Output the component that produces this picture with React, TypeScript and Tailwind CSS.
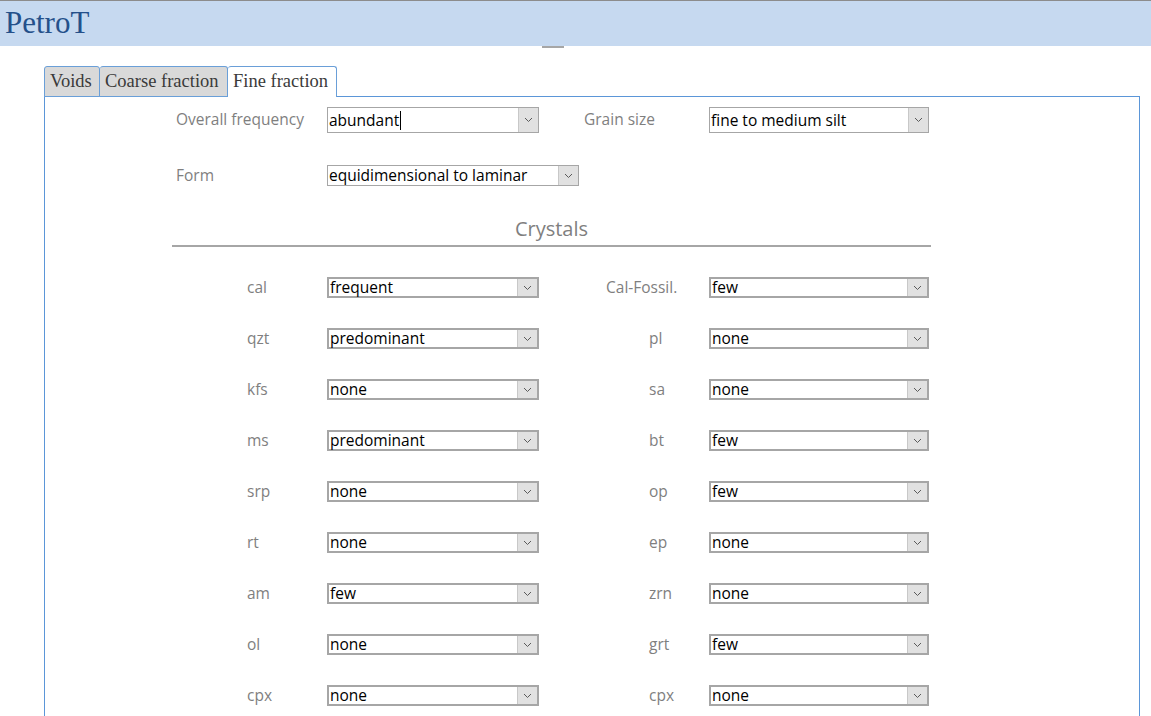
import React from 'react';

const serif = { fontFamily: '"Liberation Serif", "DejaVu Serif", serif' };
const sans = { fontFamily: '"Open Sans", "Noto Sans", sans-serif' };

type ComboProps = {
  value: string;
  width: string;
  height: string;
  thick?: boolean;
  cursor?: boolean;
};

// Access-style combo box with the little grey drop button
const Combo: React.FC<ComboProps> = ({ value, width, height, thick, cursor }) => (
  <div
    className={`${width} ${height} flex shrink-0 bg-white ${thick ? 'border-2' : 'border'} border-[#a6a6a6]`}
  >
    <div
      className={`flex flex-1 whitespace-nowrap pl-[1px] text-[15.5px] leading-[17px] text-black ${thick ? 'items-end' : 'items-center'}`}
      style={sans}
    >
      <span>{value}</span>
      {cursor && <span className="ml-px h-[19px] w-px bg-black" />}
    </div>
    <div className="flex w-[20px] items-center justify-center border-l border-[#c8c8c8] bg-[#e1e1e1]">
      <svg width="9" height="6" viewBox="0 0 9 6" fill="none">
        <polyline points="1,1 4.5,4.5 8,1" stroke="#5a5a5a" strokeWidth="1" />
      </svg>
    </div>
  </div>
);

const crystals: [string, string, string, string][] = [
  ['cal', 'frequent', 'Cal-Fossil.', 'few'],
  ['qzt', 'predominant', 'pl', 'none'],
  ['kfs', 'none', 'sa', 'none'],
  ['ms', 'predominant', 'bt', 'few'],
  ['srp', 'none', 'op', 'few'],
  ['rt', 'none', 'ep', 'none'],
  ['am', 'few', 'zrn', 'none'],
  ['ol', 'none', 'grt', 'few'],
  ['cpx', 'none', 'cpx', 'none'],
];

export default function App() {
  return (
    <div className="h-screen overflow-hidden bg-white">
      <header className="h-[46px] border-t border-[#8c8c8c] bg-[#c6d9f0] pl-[5px]">
        <h1 className="text-[31px] leading-[44px] text-[#24508a]" style={serif}>
          PetroT
        </h1>
      </header>
      <div className="ml-[542px] h-[2px] w-[22px] bg-[#a6a6a6]" />

      <div className="ml-[44px] mr-[11px] mt-[18px]">
        {/* tab strip */}
        <div className="relative z-10 flex h-[31px] items-end text-[18.5px] text-[#3a3a3a]" style={serif}>
          <div className="h-[31px] w-[56px] rounded-t-[3px] border border-[#6a9fd8] bg-[#d9d9d9] pl-[5px] leading-[29px]">Voids</div>
          <div className="h-[31px] w-[128px] whitespace-nowrap rounded-t-[3px] border border-l-0 border-[#6a9fd8] bg-[#d9d9d9] pl-[5px] leading-[29px]">Coarse fraction</div>
          <div className="h-[31px] w-[109px] whitespace-nowrap rounded-t-[3px] border border-b-0 border-l-0 border-[#6a9fd8] bg-white pl-[5px] leading-[29px]">Fine fraction</div>
        </div>

        <div className="-mt-px h-[640px] border border-[#5b96d8] pl-[127px]" style={sans}>
          {/* general fields */}
          <div className="mt-[10px] flex h-[26px] items-center text-[15.5px] text-[#7f7f7f]">
            <div className="w-[155px] pl-[4px]">Overall frequency</div>
            <Combo value="abundant" width="w-[212px]" height="h-[26px]" cursor />
            <div className="w-[170px] pl-[45px]">Grain size</div>
            <Combo value="fine to medium silt" width="w-[220px]" height="h-[26px]" />
          </div>
          <div className="mt-[32px] flex h-[21px] items-center text-[15.5px] text-[#7f7f7f]">
            <div className="w-[155px] pl-[4px]">Form</div>
            <Combo value="equidimensional to laminar" width="w-[252px]" height="h-[21px]" />
          </div>

          <div className="mt-[29px] h-[32px] w-[759px] border-b-2 border-[#a6a6a6] text-center text-[20px] leading-[28px] text-[#7f7f7f]">
            Crystals
          </div>

          <div className="mt-[30px] flex flex-col gap-[30px]">
            {crystals.map(([l, lv, r, rv], i) => (
              <div key={i} className="flex h-[21px] items-center text-[15.5px] text-[#7f7f7f]">
                <div className="w-[155px] pl-[75px]">{l}</div>
                <Combo value={lv} width="w-[212px]" height="h-[21px]" thick />
                <div className={`w-[170px] ${i === 0 ? 'pl-[67px]' : 'pl-[110px]'}`}>{r}</div>
                <Combo value={rv} width="w-[220px]" height="h-[21px]" thick />
              </div>
            ))}
          </div>
        </div>
      </div>
    </div>
  );
}
